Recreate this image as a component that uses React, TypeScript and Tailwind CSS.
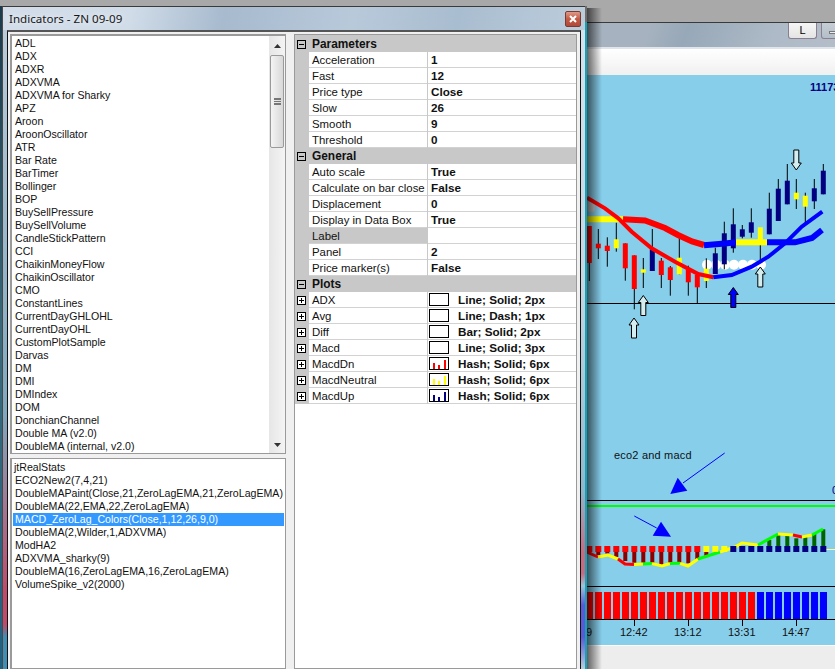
import React from 'react';

const ui = "font-['Liberation_Sans',Arial,sans-serif]";

const available = [
  'ADL', 'ADX', 'ADXR', 'ADXVMA', 'ADXVMA for Sharky', 'APZ', 'Aroon', 'AroonOscillator', 'ATR', 'Bar Rate',
  'BarTimer', 'Bollinger', 'BOP', 'BuySellPressure', 'BuySellVolume', 'CandleStickPattern', 'CCI',
  'ChaikinMoneyFlow', 'ChaikinOscillator', 'CMO', 'ConstantLines', 'CurrentDayGHLOHL', 'CurrentDayOHL',
  'CustomPlotSample', 'Darvas', 'DM', 'DMI', 'DMIndex', 'DOM', 'DonchianChannel', 'Double MA (v2.0)',
  'DoubleMA (internal, v2.0)',
];

const applied = [
  'jtRealStats', 'ECO2New2(7,4,21)', 'DoubleMAPaint(Close,21,ZeroLagEMA,21,ZeroLagEMA)',
  'DoubleMA(22,EMA,22,ZeroLagEMA)', 'MACD_ZeroLag_Colors(Close,1,12,26,9,0)', 'DoubleMA(2,Wilder,1,ADXVMA)',
  'ModHA2', 'ADXVMA_sharky(9)', 'DoubleMA(16,ZeroLagEMA,16,ZeroLagEMA)', 'VolumeSpike_v2(2000)',
];

const parameters = [
  ['Acceleration', '1'], ['Fast', '12'], ['Price type', 'Close'], ['Slow', '26'], ['Smooth', '9'], ['Threshold', '0'],
];

const general = [
  ['Auto scale', 'True'], ['Calculate on bar close', 'False'], ['Displacement', '0'], ['Display in Data Box', 'True'],
  ['Label', ''], ['Panel', '2'], ['Price marker(s)', 'False'],
];

const plots = [
  ['ADX', 'Line; Solid; 2px', ''], ['Avg', 'Line; Dash; 1px', ''], ['Diff', 'Bar; Solid; 2px', ''],
  ['Macd', 'Line; Solid; 3px', ''], ['MacdDn', 'Hash; Solid; 6px', '#ff0000'],
  ['MacdNeutral', 'Hash; Solid; 6px', '#ffff00'], ['MacdUp', 'Hash; Solid; 6px', '#000080'],
];

const R = '#ff0000';
const Y = '#ffff00';
const N = '#000080';

// wick top, wick bottom, body top, body bottom, colour
const candles: [number, number, number, number, string][] = [
  [226, 281, 226, 263, R], [229, 259, 243.7, 248.3, R], [237.3, 266.7, 245.7, 251, R], [222.7, 251.7, 239.3, 248.3, Y],
  [243.3, 280.7, 243.3, 268.3, R], [255.3, 309.3, 255.3, 289, R], [258, 288, 269.3, 272.7, Y], [229, 271, 249.3, 271, N],
  [258, 288, 260.7, 275, R], [266, 295.7, 267.3, 280, R], [237.3, 274.3, 257.7, 274.3, Y], [265.7, 295.7, 270, 282.3, R],
  [273.3, 303.3, 275, 287.3, R], [258.3, 288, 268.7, 281, Y], [247.7, 274, 253.3, 274, N], [221.7, 269.3, 233.3, 264.3, N],
  [208.3, 252.7, 224.3, 248.3, N], [225, 238.3, 229.3, 236.7, N], [208.3, 237.7, 222.3, 232.7, N], [245, 260, 227.3, 245, Y],
  [192.7, 234.3, 208.7, 234.3, N], [179, 221, 188.7, 221, N], [164, 204.3, 180.7, 204.3, N], [179, 209, 192.7, 199.3, Y],
  [192.7, 223.3, 195.7, 206.7, Y], [179, 209, 188.3, 201.3, N], [164, 194.3, 170.7, 194.3, N],
];

const macdDown = [553, 555, 553.5, 557, 561, 562.7, 562.7, 563.3, 565, 564, 562.7, 563.3, 560, 556.7];
const macdUp = [540, 534, 536, 538.3, 536, 534, 529.3];

const macdLine: [string, string][] = [
  ['587,552 598,557', R], ['598,557 608,555 618,559', Y], ['618,559 625,564 634,564.5', R], ['634,564.5 643,564', Y],
  ['643,564 652,563.5', '#00ff00'], ['652,563.5 662,566 670,563.5', Y], ['670,563.5 680,563.3', '#00ff00'],
  ['680,563.3 688,566 698,559', Y], ['698,559 720,552', '#00ff00'], ['720,552 735,547 742,543 758,545', Y],
  ['758,545 778,534', '#00ff00'], ['778,534 793,535', Y], ['793,535 802,537', R], ['802,537 812,535', Y],
  ['812,535 823,529', '#00ff00'],
];

const candleX = (i: number) => 589.3 + 9 * i;

function HollowArrow({ x, y, down, fill = '#d4eef0' }: { x: number; y: number; down?: boolean; fill?: string }) {
  const d = `M${x} ${y} L${x + 5} ${y + 7} L${x + 2.5} ${y + 7} L${x + 2.5} ${y + 20} L${x - 2.5} ${y + 20} L${x - 2.5} ${y + 7} L${x - 5} ${y + 7} Z`;
  return <path d={d} fill={fill} stroke="#000" strokeWidth="1" transform={down ? `rotate(180 ${x} ${y + 10})` : undefined} />;
}

function Chart() {
  return (
    <svg className="absolute inset-0 w-full h-full" viewBox="587 75 248 570">
      <rect x="587" y="201.7" width="8" height="10" rx="3" fill="#c8c8c8" />
      <line x1="587" y1="303.5" x2="835" y2="303.5" stroke="#000" />
      {[707, 716, 725, 734, 743, 752, 761].map((x) => (
        <circle key={x} cx={x} cy="264.7" r="5" fill="#fff" />
      ))}

      {candles.map(([wt, wb, bt, bb, c], i) => (
        <g key={i}>
          <line x1={candleX(i)} y1={wt} x2={candleX(i)} y2={wb} stroke="#000" />
          <rect x={candleX(i) - 2.5} y={bt} width="5" height={bb - bt} fill={c} />
        </g>
      ))}

      <g fill="none" strokeWidth="6">
        <polyline points="587,219.3 623,219.3" stroke={Y} />
        <polyline points="623,219.3 645,220.5 665,228 678,235 692,241.5 704,245" stroke={R} />
        <polyline points="704,245.3 725,243.5 736,242.3" stroke="#0000ff" />
        <polyline points="736,242.3 767,242.3" stroke={Y} />
        <polyline points="767,242.3 795,242.3 812,238 822,230" stroke="#0000ff" />
      </g>
      <g fill="none" strokeWidth="4">
        <polyline points="587,197.7 605,208.3 618.3,218.3 631.7,231.7 651.7,248.3 675,261.7 698.3,274 713.3,277.3" stroke={R} />
        <polyline points="713.3,277.3 731.7,275 751.7,266.7 768.3,256.7 785,243.3 801.7,226.7 822.3,211.7" stroke="#0000ff" />
      </g>

      <HollowArrow x={796.3} y={150} down />
      <HollowArrow x={643.3} y={295.5} />
      <HollowArrow x={634} y={318} />
      <HollowArrow x={760.3} y={267} />
      <HollowArrow x={733.3} y={287.5} fill="#0000ff" />

      {/* hand drawn notes */}
      <line x1="724.7" y1="453" x2="683" y2="483" stroke="#0000ff" />
      <polygon points="677.7,477.7 687.3,490.7 670.3,494" fill="#0000ff" />
      <line x1="634.3" y1="516" x2="656.7" y2="528" stroke="#0000ff" />
      <polygon points="661,521.7 671,536.7 652.7,535.7" fill="#0000ff" />

      <line x1="587" y1="500.5" x2="835" y2="500.5" stroke="#000" />
      <line x1="587" y1="506" x2="835" y2="506" stroke="#00ff00" strokeWidth="2" />

      {/* macd panel */}
      <line x1="826" y1="549.5" x2="835" y2="549.5" stroke="#ffffa0" />
      {macdDown.map((b, i) => (
        <rect key={i} x={candleX(i) - 2} y="550" width="4" height={b - 550} fill="#8b0000" />
      ))}
      {macdUp.map((t, i) => (
        <rect key={i} x={candleX(20 + i) - 2} y={t} width="4" height={547 - t} fill="#006400" />
      ))}
      {macdLine.map(([points, c], i) => (
        <polyline key={i} points={points} fill="none" stroke={c} strokeWidth="3" />
      ))}
      {candles.map((_, i) => (
        <rect key={i} x={candleX(i) - 3} y="546" width="6" height="6" fill={i < 13 ? R : i < 16 ? Y : N} />
      ))}

      {/* volume panel */}
      <line x1="587" y1="586.5" x2="835" y2="586.5" stroke="#000" />
      {candles.map((_, i) => (
        <rect key={i} x={586 + 9 * i} y="592" width="7" height="27" fill={i < 19 ? R : '#0000ff'} />
      ))}
      <line x1="587" y1="619.5" x2="835" y2="619.5" stroke="#000" />
      {[634.5, 688.5, 742.5, 796.5].map((x) => (
        <line key={x} x1={x} y1="619" x2={x} y2="626" stroke="#000" />
      ))}
    </svg>
  );
}

function Box({ plus }: { plus?: boolean }) {
  return (
    <svg width="9" height="9" viewBox="0 0 9 9" className="shrink-0">
      <rect x="0.5" y="0.5" width="8" height="8" fill={plus ? '#fff' : 'none'} stroke="#000" />
      <line x1="2" y1="4.5" x2="7" y2="4.5" stroke="#000" />
      {plus && <line x1="4.5" y1="2" x2="4.5" y2="7" stroke="#000" />}
    </svg>
  );
}

function Category({ title }: { title: string }) {
  return (
    <div className="h-4 flex items-center bg-[#c8c8c8]">
      <div className="w-[14px] pl-[2px] flex items-center"><Box /></div>
      <span className="pl-[3px] font-bold text-[11.9px] text-[#111]">{title}</span>
    </div>
  );
}

function Row({ name, value, grey }: { name: string; value: string; grey?: boolean }) {
  return (
    <div className="h-4 flex bg-[#c8c8c8]">
      <div className="w-[14px]" />
      <div className={`w-[118px] pl-[3px] pt-px flex items-center text-[11.4px] border-b border-[#d2d2d2] ${grey ? 'bg-[#c8c8c8]' : 'bg-white'}`}>{name}</div>
      <div className="flex-1 ml-px pl-[3px] flex items-center font-bold text-[11.7px] bg-white border-b border-[#d2d2d2]">{value}</div>
    </div>
  );
}

function PlotRow({ name, value, color }: { name: string; value: string; color: string }) {
  return (
    <div className="h-4 flex bg-[#c8c8c8]">
      <div className="w-[14px] pl-[2px] flex items-center"><Box plus /></div>
      <div className="w-[118px] pl-[3px] pt-px flex items-center text-[11.4px] bg-white border-b border-[#d2d2d2]">{name}</div>
      <div className="flex-1 ml-px pl-px flex items-center font-bold text-[11.7px] bg-white border-b border-[#d2d2d2]">
        <svg width="20" height="13" viewBox="0 0 20 13" className="shrink-0 mr-[9px]">
          <rect x="0.5" y="0.5" width="19" height="12" fill="#fff" stroke="#000" />
          {color && (
            <g fill={color}>
              <rect x="4" y="6" width="2" height="6" />
              <rect x="9" y="8" width="2" height="4" />
              <rect x="15" y="3" width="2" height="9" />
            </g>
          )}
        </svg>
        {value}
      </div>
    </div>
  );
}

function Scrollbar() {
  return (
    <div className="w-[16px] shrink-0 flex flex-col bg-gradient-to-r from-[#e6e6e6] to-[#f4f4f4]">
      <div className="h-[19px] flex items-center justify-center">
        <svg width="7" height="4" viewBox="0 0 7 4"><path d="M3.5 0 L7 4 L0 4 Z" fill="#333" /></svg>
      </div>
      <div className="h-[93px] mx-px flex items-center justify-center rounded-[2px] border border-[#9a9a9a] bg-gradient-to-r from-[#f4f4f4] to-[#d8d8d8]">
        <div className="w-[7px] h-[7px] border-y-2 border-[#777] flex items-center">
          <div className="w-full h-px bg-[#777]" />
        </div>
      </div>
      <div className="flex-1" />
      <div className="h-[17px] flex items-center justify-center">
        <svg width="7" height="4" viewBox="0 0 7 4"><path d="M0 0 L7 0 L3.5 4 Z" fill="#333" /></svg>
      </div>
    </div>
  );
}

function Dialog() {
  return (
    <div className="w-[587px] shrink-0 flex flex-col">
      <div className="h-[6px] bg-[#a8a8a8]" />
      <div className="flex-1 min-h-0 flex">
        <div className="w-[2px] bg-gradient-to-b from-[#1c3a4a] via-[#3a6a7a] to-[#206080]" />
        <div className="w-[583px] flex flex-col border-t border-[#3a3a3a] border-l border-l-[#4a4a4a]">
          {/* title bar */}
          <div className="h-[23px] shrink-0 flex items-center justify-between pl-[6px] pr-[4px] bg-[linear-gradient(100deg,#d2dde9_0%,#d0dce8_22%,#a7bace_38%,#b8c9da_60%,#a9bdd0_78%,#bccddc_100%)]">
            <span className="text-[11.6px] text-[#161616] font-['Noto_Sans',sans-serif] [text-shadow:0_0_6px_#fff]">Indicators - ZN 09-09</span>
            <div className="w-4 h-4 rounded-[2px] border border-[#7d3a30] flex items-center justify-center bg-gradient-to-b from-[#dd9a88] via-[#c25a45] to-[#b04a38]">
              <svg width="8" height="8" viewBox="0 0 8 8"><path d="M1 1 L7 7 M7 1 L1 7" stroke="#fff" strokeWidth="2" /></svg>
            </div>
          </div>
          <div className="flex-1 min-h-0 flex">
            {/* glass border, left */}
            <div className="w-[4px] bg-[linear-gradient(180deg,#b9cbdb_0%,#7fa9bf_60%,#c04a6a_88%,#c04a6a_93%,#3f8fb5_95%,#3f8fb5_100%)]" />
            <div className={`flex-1 min-w-0 flex flex-col bg-[#f0f0f0] border-x border-x-[#111] border-t-2 border-t-[#555] text-[10.6px] leading-[13px] text-[#111] ${ui}`}>
              <div className="flex-1 min-h-0 flex pt-[2px] pl-[2px]">
                <div className="w-[276px] shrink-0 flex flex-col">
                  <div className="h-[420px] shrink-0 flex border border-[#9a9a9a] border-l-2 border-t-2 bg-white">
                    <div className="flex-1 min-w-0 pl-[3px] pt-px">
                      {available.map((item) => (
                        <div key={item} className="h-[13px] whitespace-nowrap">{item}</div>
                      ))}
                    </div>
                    <Scrollbar />
                  </div>
                  <div className="flex-1 min-h-0 mt-[4px] border border-[#9a9a9a] border-l-2 bg-white pl-[1px] pt-[2px] pr-px">
                    {applied.map((item, i) => (
                      <div key={item} className={`h-[13px] whitespace-nowrap ${i === 0 ? 'pl-px' : 'pl-[2px]'} ${i === 4 ? 'bg-[#3399ff] text-white' : ''}`}>{item}</div>
                    ))}
                  </div>
                </div>
                <div className="w-[283px] shrink-0 ml-[8px] border border-[#9a9a9a] bg-white">
                  <div className="h-px bg-[#c8c8c8]" />
                  <Category title="Parameters" />
                  {parameters.map(([n, v]) => <Row key={n} name={n} value={v} />)}
                  <Category title="General" />
                  {general.map(([n, v]) => <Row key={n} name={n} value={v} grey={n === 'Label'} />)}
                  <Category title="Plots" />
                  {plots.map(([n, v, c]) => <PlotRow key={n} name={n} value={v} color={c} />)}
                </div>
              </div>
            </div>
            {/* glass border, right */}
            <div className="w-[4px] bg-[linear-gradient(180deg,#d5e1ec_0%,#c4d6e2_40%,#8fb8cc_72%,#c86a80_82%,#c86a80_85%,#9ec4d8_87%,#5a5ad8_90%,#5a5ad8_95%,#b9cfdc_100%)]" />
          </div>
        </div>
        <div className="w-[2px] flex flex-col">
          <div className="h-[16px] bg-[#6e6e6e]" />
          <div className="flex-1 bg-[#12a3b8]" />
        </div>
      </div>
    </div>
  );
}

function ChartWindow() {
  return (
    <div className={`relative flex-1 min-w-0 flex flex-col overflow-hidden ${ui}`}>
      <div className="h-[22px] shrink-0 bg-[#a9a9a9]" />
      <div className="h-[27px] shrink-0 flex items-start pl-[201px] gap-[4px] border-t border-[#3a3a3a] border-b-2 border-b-[#dfe5ea] bg-[linear-gradient(110deg,#a6b2bf_0%,#a6b2bf_25%,#97a8b8_40%,#aebac7_75%,#b3bec9_100%)]">
        <div className="w-[29px] h-[16px] shrink-0 flex items-center justify-center rounded-b-[3px] border border-t-0 border-[#8a7f90] bg-gradient-to-b from-[#f6f6f6] to-[#e4e4e4] text-[11px] text-black">L</div>
        <div className="w-[29px] h-[16px] shrink-0 flex items-center pl-[7px] rounded-b-[3px] border border-t-0 border-[#8a7f90] bg-gradient-to-b from-[#c6ced6] to-[#b4bec8]">
          <div className="w-[7px] h-[3px] mt-[4px] bg-[#eee] border border-[#777]" />
        </div>
      </div>
      <div className="h-[26px] shrink-0 bg-gradient-to-b from-white to-[#f0f0f0]" />
      <div className="relative h-[570px] shrink-0 bg-[#87ceeb]">
        <Chart />
        <span className="absolute left-[223px] top-[6px] text-[11px] font-bold leading-[13px] text-[#000080]">11173</span>
        <span className="absolute left-[27px] top-[374px] text-[11px] tracking-[0.2px] leading-[13px] text-[#111]">eco2 and macd</span>
        <span className="absolute left-[245px] top-[409px] text-[11px] leading-[13px] text-[#000080]">0</span>
        <span className="absolute left-[-1px] top-[551px] text-[11px] leading-[13px] text-[#111]">9</span>
        <span className="absolute left-[33px] top-[551px] text-[11px] leading-[13px] text-[#111]">12:42</span>
        <span className="absolute left-[87px] top-[551px] text-[11px] leading-[13px] text-[#111]">13:12</span>
        <span className="absolute left-[141px] top-[551px] text-[11px] leading-[13px] text-[#111]">13:31</span>
        <span className="absolute left-[195px] top-[551px] text-[11px] leading-[13px] text-[#111]">14:47</span>
      </div>
      <div className="flex-1 border-t border-white bg-[#ededed]" />
      {/* dialog drop shadow */}
      <div className="absolute inset-y-0 left-0 top-[8px] w-[15px] bg-gradient-to-r from-black/60 to-transparent" />
    </div>
  );
}

export default function App() {
  return (
    <div className="w-[835px] h-[669px] flex overflow-hidden bg-[#a9a9a9]">
      <Dialog />
      <ChartWindow />
    </div>
  );
}
